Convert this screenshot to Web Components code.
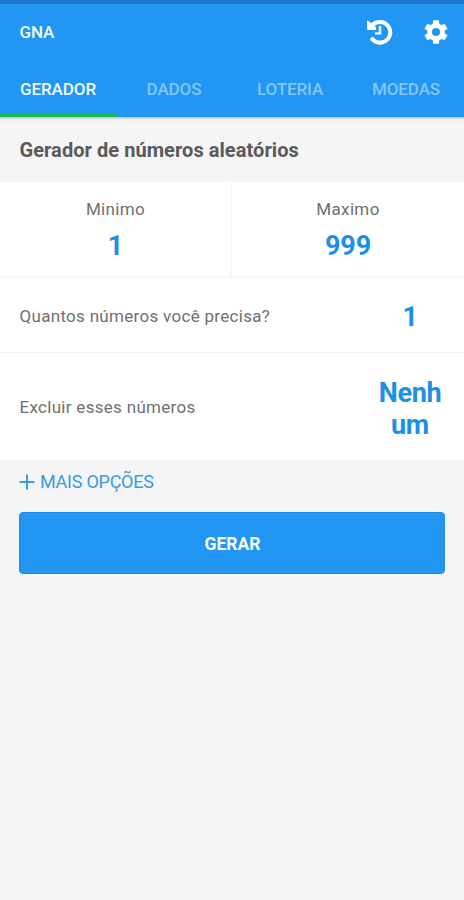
<!DOCTYPE html>
<html lang="pt">
<head>
<meta charset="utf-8">
<title>GNA</title>
<style>
html, body { margin: 0; height: 100%; }
body { background: #f5f5f5; font-family: Roboto, "Liberation Sans", sans-serif; color: #5c5c5c; overflow: hidden; }
</style>
</head>
<body>
<gna-app></gna-app>
<script>
const define = (name, html) => {
  const template = document.createElement('template');
  template.innerHTML = html;
  customElements.define(name, class extends HTMLElement {
    constructor() {
      super();
      this.attachShadow({ mode: 'open' }).append(template.content.cloneNode(true));
    }
  });
};

define('gna-header', `
<style>
:host { display: flex; align-items: center; box-sizing: border-box; height: 62px; padding: 4px 14px 0 19.5px; background: #2196f3; border-top: 4px solid #1b76d2; color: #f4faff; }
.title { flex: 1; font-size: 17px; font-weight: 500; line-height: 20px; letter-spacing: -.2px; padding-bottom: 6px; }
svg { display: block; fill: #fff; margin-bottom: 6px; }
.history { margin-right: 29px; }
</style>
<div class="title"><slot></slot></div>
<svg class="history" width="28" height="28" viewBox="0 0 28 28">
  <path d="M8 6.5C10 4.6 12.5 4 15 4A10.3 10.3 0 1 1 7.3 21.2" fill="none" stroke="#fff" stroke-width="4" stroke-linecap="round"/>
  <path d="M2 3.2Q2.2 2.2 3.2 2.8L6 5L10.2 8L11.2 10.8Q11.2 12 10 12H3.2Q2 12 2 10.8Z"/>
  <path d="M15 9V15.5H11" fill="none" stroke="#dff1ff" stroke-width="2.6" stroke-linecap="round" stroke-linejoin="round"/>
</svg>
<svg width="28" height="28" viewBox="0 0 24 24">
  <path d="M19.43 12.98c.04-.32.07-.64.07-.98s-.03-.66-.07-.98l2.11-1.65c.19-.15.24-.42.12-.64l-2-3.46c-.12-.22-.39-.3-.61-.22l-2.49 1c-.52-.4-1.08-.73-1.69-.98l-.38-2.65A.488.488 0 0 0 14 2h-4c-.25 0-.46.18-.49.42l-.38 2.65c-.61.25-1.17.59-1.69.98l-2.49-1c-.23-.09-.49 0-.61.22l-2 3.46c-.13.22-.07.49.12.64l2.11 1.65c-.04.32-.07.65-.07.98s.03.66.07.98l-2.11 1.65c-.19.15-.24.42-.12.64l2 3.46c.12.22.39.3.61.22l2.49-1c.52.4 1.08.73 1.69.98l.38 2.65c.03.24.24.42.49.42h4c.25 0 .46-.18.49-.42l.38-2.65c.61-.25 1.17-.59 1.69-.98l2.49 1c.23.09.49 0 .61-.22l2-3.46c.12-.22.07-.49-.12-.64zM12 15.5a3.5 3.5 0 1 1 0-7 3.5 3.5 0 0 1 0 7z"/>
</svg>`);

define('gna-tabs', `
<style>
:host { display: grid; grid-template-columns: repeat(4, 1fr); height: 55px; background: #2196f3; border-bottom: 1px solid #b9cfe4; box-shadow: 0 1px 3px rgba(0,0,40,.12); }
</style><slot></slot>`);

define('gna-tab', `
<style>
:host { display: flex; align-items: center; justify-content: center; box-sizing: border-box; padding-top: 3px; border-bottom: 4px solid transparent; font-size: 17px; font-weight: 500; line-height: 20px; color: #84c7fb; letter-spacing: -.1px; }
:host([active]) { color: #f4faff; border-color: #16bd4e; margin-right: -1px; padding-right: 1px; }
</style><slot></slot>`);

define('gna-heading', `
<style>
:host { display: block; box-sizing: border-box; height: 64px; padding: 20px 19.5px 0; font-size: 20px; line-height: 24px; font-weight: 700; letter-spacing: .06px; color: #5a5a5a; }
</style><slot></slot>`);

define('gna-range', `
<style>
:host { display: grid; grid-template-columns: 1fr 1fr; height: 94px; background: #fff; border-bottom: 2px solid #f6f6f6; }
</style><slot></slot>`);

define('gna-bound', `
<style>
:host { display: flex; flex-direction: column; align-items: center; padding-top: 17px; }
:host(:first-child) { border-right: 1px solid #f3f3f3; }
.label { font-size: 17px; line-height: 20px; color: #707070; letter-spacing: .35px; }
.value { font-size: 27px; line-height: 32px; font-weight: 700; letter-spacing: -.2px; color: #1e8fe8; margin-top: 11px; }
</style><div class="label"><slot name="label"></slot></div><div class="value"><slot></slot></div>`);

define('gna-row', `
<style>
:host { display: flex; align-items: center; box-sizing: border-box; height: 75px; padding: 0 19px 0 19.5px; background: #fff; border-bottom: 1px solid #f4f4f4; }
:host(:last-of-type) { height: 107px; border-bottom: 0; }
.label { flex: 1; font-size: 17px; line-height: 20px; padding-top: 1px; color: #707070; letter-spacing: .3px; }
.value { width: 70px; text-align: center; font-size: 27px; line-height: 32px; font-weight: 700; letter-spacing: -.3px; color: #1e8fe8; overflow-wrap: anywhere; padding-top: 4px; }
</style><div class="label"><slot name="label"></slot></div><div class="value"><slot></slot></div>`);

define('gna-more', `
<style>
:host { display: flex; align-items: center; gap: 5px; box-sizing: border-box; height: 42px; padding-top: 1px; margin-left: 19px; font-size: 18px; line-height: 22px; color: #389cdf; letter-spacing: -.25px; }
svg { display: block; }
</style>
<svg width="16" height="16" viewBox="0 0 16 16"><path d="M8 .5v15M.5 8h15" stroke="#389cdf" stroke-width="2"/></svg><span><slot></slot></span>`);

define('gna-button', `
<style>
:host { display: block; margin: 10px 19px 0; }
button { display: block; width: 100%; height: 62px; padding: 2px 0 0 1px; border: 1px solid #1b8ce6; border-radius: 4px; background: #2196f3; color: #f8fcff; font: 700 17.5px/22px Roboto, sans-serif; letter-spacing: 0; }
</style><button><slot></slot></button>`);

define('gna-app', `
<style>:host { display: flex; flex-direction: column; height: 900px; } section { display: block; }</style>
<gna-header>GNA</gna-header>
<gna-tabs><gna-tab active>GERADOR</gna-tab><gna-tab>DADOS</gna-tab><gna-tab>LOTERIA</gna-tab><gna-tab>MOEDAS</gna-tab></gna-tabs>
<gna-heading>Gerador de números aleatórios</gna-heading>
<gna-range>
  <gna-bound><span slot="label">Minimo</span>1</gna-bound>
  <gna-bound><span slot="label">Maximo</span>999</gna-bound>
</gna-range>
<section>
  <gna-row><span slot="label">Quantos números você precisa?</span>1</gna-row>
  <gna-row><span slot="label">Excluir esses números</span>Nenhum</gna-row>
</section>
<gna-more>MAIS OPÇÕES</gna-more>
<gna-button>GERAR</gna-button>`);
</script>
</body>
</html>
